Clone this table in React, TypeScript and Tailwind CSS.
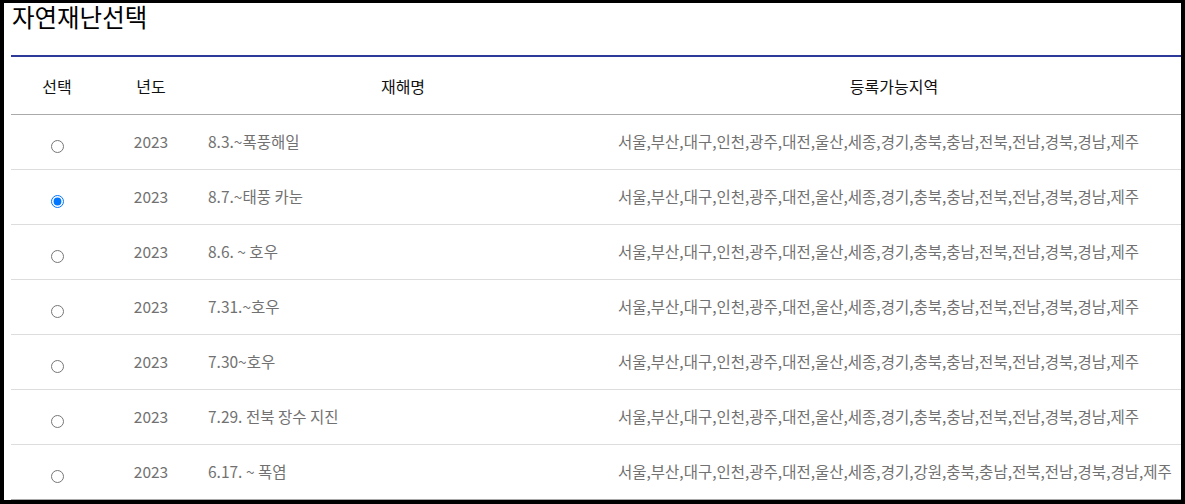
import React from "react";

const REGIONS =
  "서울,부산,대구,인천,광주,대전,울산,세종,경기,충북,충남,전북,전남,경북,경남,제주";

const rows = [
  { year: "2023", name: "8.3.~폭풍해일", regions: REGIONS },
  { year: "2023", name: "8.7.~태풍 카눈", regions: REGIONS, checked: true },
  { year: "2023", name: "8.6. ~ 호우", regions: REGIONS },
  { year: "2023", name: "7.31.~호우", regions: REGIONS },
  { year: "2023", name: "7.30~호우", regions: REGIONS },
  { year: "2023", name: "7.29. 전북 장수 지진", regions: REGIONS },
  {
    year: "2023",
    name: "6.17. ~ 폭염",
    regions:
      "서울,부산,대구,인천,광주,대전,울산,세종,경기,강원,충북,충남,전북,전남,경북,경남,제주",
  },
];

const cols = "grid grid-cols-[92px_96px_408px_1fr]";

const App: React.FC = () => {
  return (
    <div
      className="w-[1185px] h-[504px] bg-black pt-[3px] pl-[4px] pr-[4px] pb-[4px]"
      style={{ fontFamily: '"Noto Sans CJK KR", "Noto Sans", sans-serif' }}
    >
      <div className="h-full bg-white pl-[7px]">
        {/* Title */}
        <div className="h-[52px] pl-[1px]">
          <h1 className="text-[24.5px] leading-[28px] text-black font-normal">
            자연재난선택
          </h1>
        </div>

        {/* Header */}
        <div
          className={`${cols} h-[60px] border-t-2 border-b border-t-[#2d3a99] border-b-[#aaaaaa] text-[16px] text-[#111]`}
        >
          <div className="flex items-center justify-center">선택</div>
          <div className="flex items-center justify-center">년도</div>
          <div className="flex items-center justify-center">재해명</div>
          <div className="flex items-center justify-center">등록가능지역</div>
        </div>

        {/* Rows */}
        {rows.map((r, i) => (
          <div
            key={i}
            className={`${cols} h-[55px] border-b ${
              i === rows.length - 1 ? "border-b-[#a8a8a8]" : "border-b-[#dddddd]"
            } text-[15.5px] text-[#717171]`}
          >
            <div className="flex items-center justify-center">
              <input
                type="radio"
                name="disaster"
                defaultChecked={r.checked}
                className="m-0 mt-[8px] w-[13px] h-[13px]"
              />
            </div>
            <div className="flex items-center justify-center pb-[1px]">{r.year}</div>
            <div className="flex items-center pl-[9px] pb-[1px] whitespace-nowrap">
              {r.name}
            </div>
            <div className="flex items-center pl-[11px] pb-[1px] whitespace-nowrap">
              {r.regions}
            </div>
          </div>
        ))}
      </div>
    </div>
  );
};

export default App;
